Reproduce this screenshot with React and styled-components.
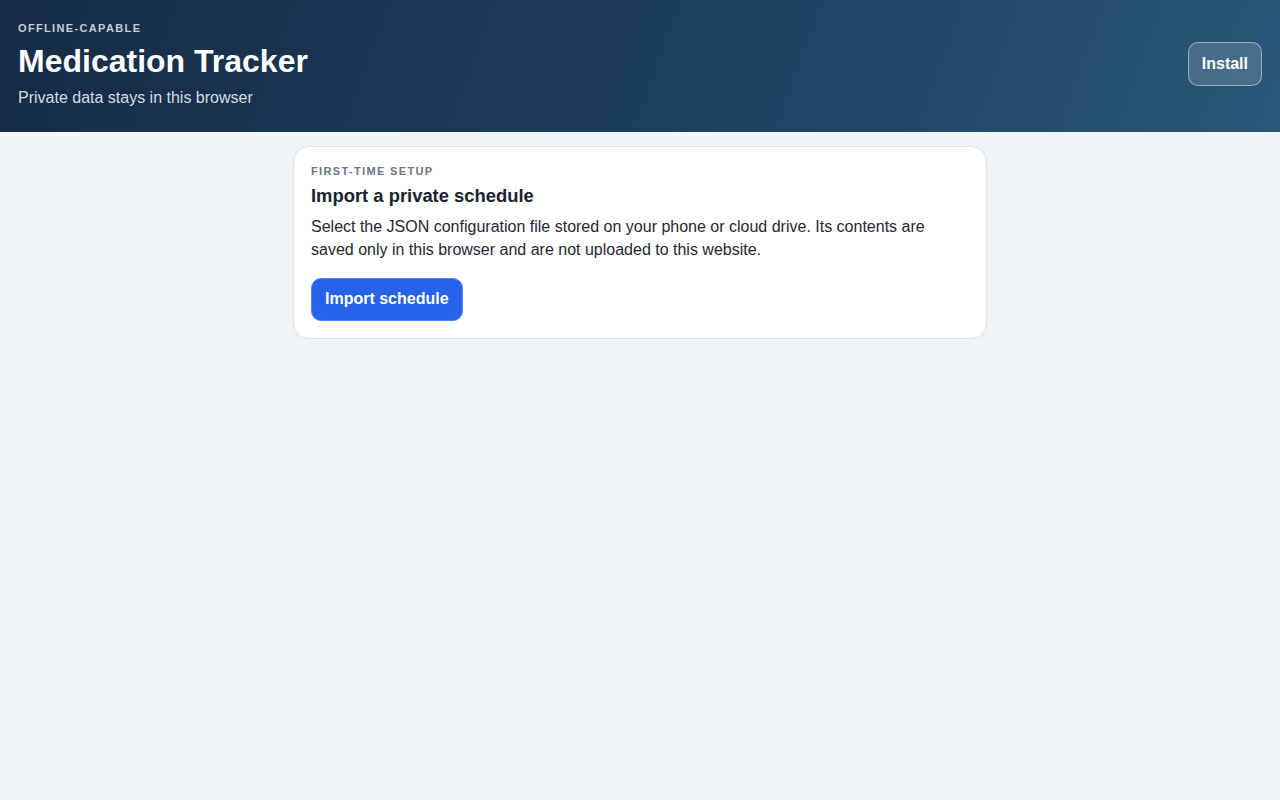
import React from 'react';
import styled, { createGlobalStyle } from 'styled-components';

const GlobalStyle = createGlobalStyle`
  html, body {
    margin: 0;
    padding: 0;
    background: #f3f6f9;
    font-family: "Liberation Sans", Arial, sans-serif;
    color: #1a2230;
  }
  * { box-sizing: border-box; }
`;

const Header = styled.header`
  height: 132px;
  padding: 20px 18px 0 18px;
  display: flex;
  justify-content: space-between;
  align-items: flex-start;
  background: linear-gradient(110deg, #152b45 0%, #1d3d5c 50%, #2a5878 100%);
  color: #fff;
`;

const Brand = styled.div`
  display: flex;
  flex-direction: column;
`;

const Eyebrow = styled.div`
  font-size: 11px;
  font-weight: 700;
  letter-spacing: 1.35px;
  text-transform: uppercase;
  line-height: 16px;
  color: ${(p) => p.$color || '#c4ceda'};
`;

const Title = styled.h1`
  margin: 6px 0 0 0;
  font-size: 32px;
  line-height: 38px;
  font-weight: 700;
  color: #ffffff;
`;

const Subtitle = styled.p`
  margin: 8px 0 0 0;
  font-size: 16px;
  line-height: 20px;
  color: #d3dce6;
`;

const InstallButton = styled.button`
  margin-top: 22px;
  height: 44px;
  padding: 0 13px;
  border-radius: 10px;
  border: 1px solid rgba(255, 255, 255, 0.45);
  background: rgba(255, 255, 255, 0.14);
  color: #fff;
  font-family: inherit;
  font-size: 16px;
  font-weight: 700;
`;

const Main = styled.main`
  display: flex;
  justify-content: center;
  padding-top: 14px;
`;

const Card = styled.section`
  width: 694px;
  background: #ffffff;
  border: 1px solid #dde3ea;
  border-radius: 16px;
  padding: 16px 17px 17px 17px;
  box-shadow: 0 4px 12px rgba(20, 40, 70, 0.05);
`;

const CardTitle = styled.h2`
  margin: 5px 0 0 0;
  font-size: 18.4px;
  line-height: 24px;
  font-weight: 700;
  color: #1a2230;
`;

const Text = styled.p`
  margin: 7px 0 0 0;
  font-size: 16px;
  line-height: 23px;
  color: #1f2733;
`;

const PrimaryButton = styled.button`
  margin-top: 17px;
  height: 43px;
  padding: 0 13px 1px 13px;
  border-radius: 10px;
  border: 1px solid #4f84ee;
  background: #2563eb;
  color: #fff;
  font-family: inherit;
  font-size: 16px;
  font-weight: 700;
`;

export default function App() {
  return (
    <>
      <GlobalStyle />
      <Header>
        <Brand>
          <Eyebrow>Offline-capable</Eyebrow>
          <Title>Medication Tracker</Title>
          <Subtitle>Private data stays in this browser</Subtitle>
        </Brand>
        <InstallButton>Install</InstallButton>
      </Header>
      <Main>
        <Card>
          <Eyebrow $color="#6b7686">First-time setup</Eyebrow>
          <CardTitle>Import a private schedule</CardTitle>
          <Text>
            Select the JSON configuration file stored on your phone or cloud drive. Its contents are
            saved only in this browser and are not uploaded to this website.
          </Text>
          <PrimaryButton>Import schedule</PrimaryButton>
        </Card>
      </Main>
    </>
  );
}
